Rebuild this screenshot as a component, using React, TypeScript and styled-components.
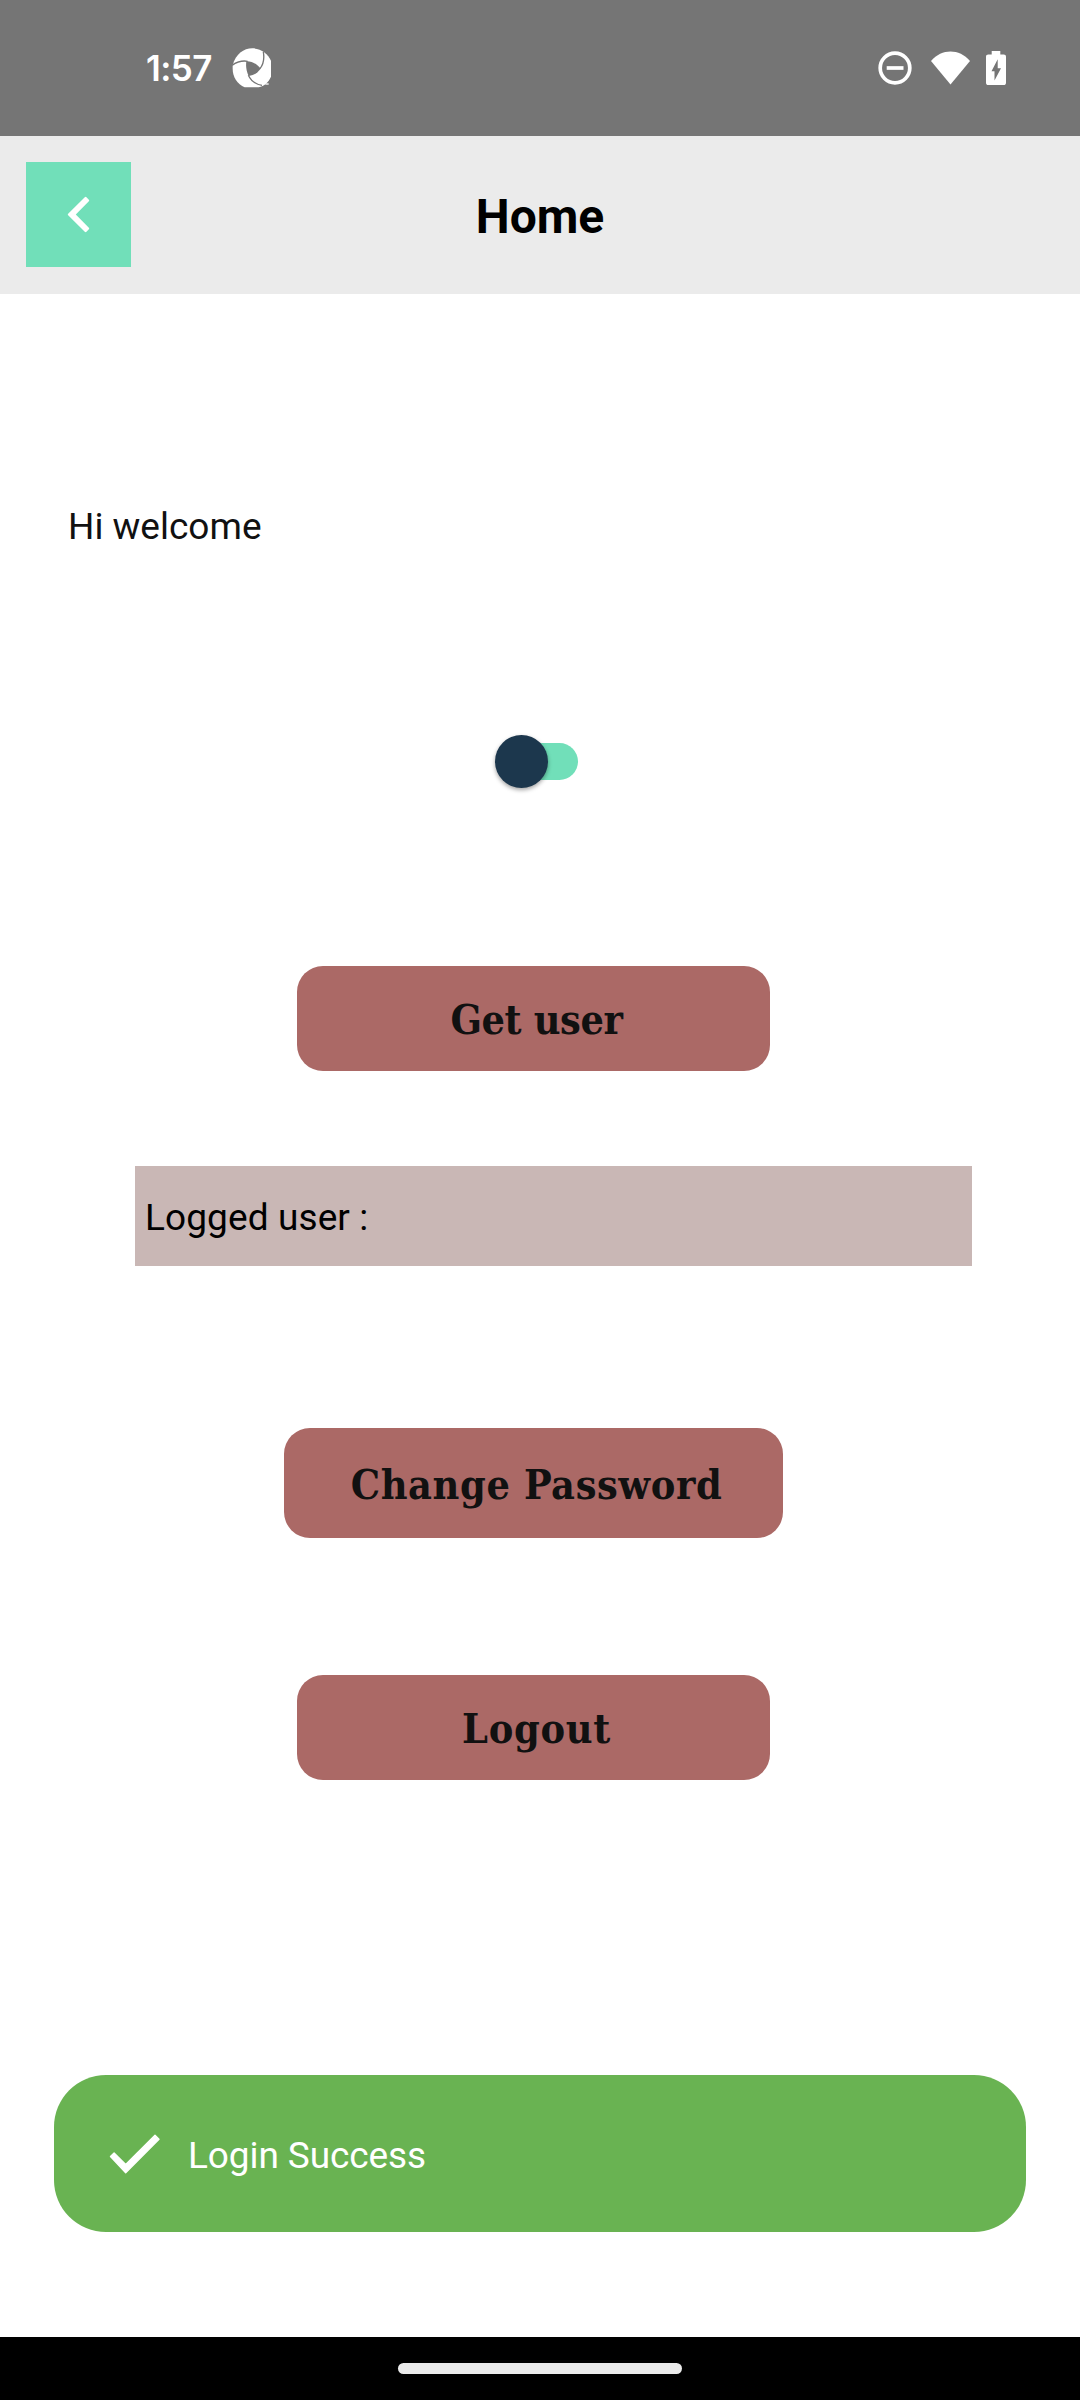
import React from "react";
import styled, { createGlobalStyle } from "styled-components";

const GlobalStyle = createGlobalStyle`
  * { box-sizing: border-box; }
  body { margin: 0; background: #fff; }
`;

const Screen = styled.div`
  display: flex;
  flex-direction: column;
  width: 1080px;
  height: 2400px;
  background: #fff;
  font-family: Roboto, sans-serif;
  overflow: hidden;
`;

const StatusBar = styled.div`
  display: flex;
  align-items: center;
  justify-content: space-between;
  height: 136px;
  padding: 0 74px 0 146px;
  background: #757575;
`;

const StatusGroup = styled.div`
  display: flex;
  align-items: center;
`;

const Clock = styled.span`
  width: 86px;
  font: 600 35px/40px Inter, sans-serif;
  letter-spacing: -0.6px;
  color: #fff;
  white-space: nowrap;
`;

const Header = styled.header`
  display: grid;
  grid-template-columns: 105px 1fr 105px;
  height: 158px;
  padding: 26px 26px 27px;
  background: #ebebeb;
`;

const BackButton = styled.button`
  display: flex;
  width: 105px;
  height: 105px;
  padding: 0;
  border: 0;
  background: #71dfb9;
`;

const Title = styled.h1`
  margin: 0;
  padding-top: 27px;
  font: 700 48px/56px Roboto, sans-serif;
  text-align: center;
  color: #000;
`;

const Content = styled.main`
  display: flex;
  flex-direction: column;
  flex: 1;
`;

const Greeting = styled.p`
  margin: 211px 0 0 68px;
  font-size: 37px;
  line-height: 44px;
  color: #111;
`;

const Switch = styled.div`
  display: flex;
  align-items: center;
  width: 83px;
  height: 53px;
  margin: 186px 0 0 495px;
`;

const Thumb = styled.div`
  flex: none;
  width: 53px;
  height: 53px;
  border-radius: 50%;
  background: #1c374d;
  box-shadow: 0 2px 4px rgba(0, 0, 0, 0.36);
  z-index: 1;
`;

const Track = styled.div`
  flex: none;
  width: 70px;
  height: 37px;
  margin-left: -40px;
  border-radius: 19px;
  background: #71dfb9;
`;

const ActionButton = styled.button<{ $top: number; $left: number; $width: number; $height: number; $spacing: number }>`
  display: flex;
  align-items: center;
  justify-content: center;
  width: ${(p) => p.$width}px;
  height: ${(p) => p.$height}px;
  margin: ${(p) => p.$top}px 0 0 ${(p) => p.$left}px;
  padding: 3px 0 0 6px;
  border: 0;
  border-radius: 26px;
  background: #ab6966;
  font: bold 41px/56px "DejaVu Serif Condensed", "DejaVu Serif", serif;
  font-stretch: condensed;
  letter-spacing: ${(p) => p.$spacing}px;
  color: #111;
  white-space: nowrap;
`;

const UserField = styled.div`
  width: 837px;
  height: 100px;
  margin: 95px 0 0 135px;
  padding: 30px 10px;
  background: #c9b7b5;
  font-size: 37px;
  line-height: 44px;
  letter-spacing: 0.1px;
  color: #000;
`;

const Toast = styled.div`
  display: flex;
  align-items: center;
  width: 972px;
  height: 157px;
  margin: 295px 0 0 54px;
  padding-left: 51px;
  gap: 23px;
  border-radius: 52px;
  background: #69b352;
  font-size: 37px;
  line-height: 44px;
  letter-spacing: -0.1px;
  color: #fff;
`;

const ToastText = styled.span`
  padding-top: 5px;
`;

const NavBar = styled.footer`
  display: flex;
  justify-content: center;
  height: 63px;
  padding-top: 26px;
  background: #000;
`;

const NavHandle = styled.div`
  width: 284px;
  height: 11px;
  border-radius: 6px;
  background: #ebebeb;
`;

const WifiSlot = styled.div`
  display: flex;
  margin: 0 16px 0 19px;
`;

const ApertureIcon = () => (
  <svg width="40" height="40" viewBox="336 56 120 120">
    <path d="M338 108C347 74 371 57 397 57C423 57 444 73 453 94V142C445 160 433 169 416 174H374C352 163 338 144 338 118Z" fill="#fff" />
    <path d="M379 96C394 95 412 104 422 118C412 131 402 138 386 140C379 126 377 111 379 96Z" fill="#757575" />
    <path d="M336 108C352 97 367 93 383 96M430 68C434 90 429 106 420 118M385 138C393 155 406 165 426 168" fill="none" stroke="#757575" strokeWidth="4" />
    <path d="M436 164h10" stroke="#fff" strokeWidth="4" />
  </svg>
);

const DoNotDisturbIcon = () => (
  <svg width="34" height="34" viewBox="0 0 34 34" fill="none" stroke="#fff" strokeWidth="3.7">
    <circle cx="17" cy="17" r="14.8" />
    <path d="M8.7 17h16.8" />
  </svg>
);

const WifiIcon = () => (
  <svg width="39" height="34" viewBox="0 0 39 34">
    <path d="M0 10C11-2.6 28-2.6 39 10L19.5 33.5Z" fill="#fff" />
  </svg>
);

const BatteryIcon = () => (
  <svg width="20" height="34" viewBox="0 0 20 34">
    <path d="M5.7 0h8.6v3.6h3.4c1.4 0 2.3.9 2.3 2.2v25.9c0 1.4-.9 2.3-2.3 2.3H2.3C.9 34 0 33.1 0 31.7V5.8c0-1.3.9-2.2 2.3-2.2h3.4z" fill="#fff" />
    <path d="M11.7 8.2v9H15L8.5 29.5v-9.2H5.5z" fill="#757575" />
  </svg>
);

export default function App() {
  return (
    <Screen>
      <GlobalStyle />
      <StatusBar>
        <StatusGroup>
          <Clock>1:57</Clock>
          <ApertureIcon />
        </StatusGroup>
        <StatusGroup>
          <DoNotDisturbIcon />
          <WifiSlot>
            <WifiIcon />
          </WifiSlot>
          <BatteryIcon />
        </StatusGroup>
      </StatusBar>
      <Header>
        <BackButton aria-label="Back">
          <svg width="105" height="105" viewBox="0 0 105 105">
            <path d="M59.6 36 43 52.5 59.6 69 62 66.5 48.2 52.5 62 38.5Z" fill="#fff" stroke="#fff" strokeWidth="2.4" strokeLinejoin="round" />
          </svg>
        </BackButton>
        <Title>Home</Title>
      </Header>
      <Content>
        <Greeting>Hi welcome</Greeting>
        <Switch role="switch" aria-checked="false">
          <Thumb />
          <Track />
        </Switch>
        <ActionButton $top={178} $left={297} $width={473} $height={105} $spacing={-0.4}>Get user</ActionButton>
        <UserField>Logged user :</UserField>
        <ActionButton $top={162} $left={284} $width={499} $height={110} $spacing={0.6}>Change Password</ActionButton>
        <ActionButton $top={137} $left={297} $width={473} $height={105} $spacing={0.7}>Logout</ActionButton>
        <Toast>
          <svg width="60" height="60" viewBox="0 0 60 60">
            <path d="m5.5 32.5 3.6-3.6 11.6 11.5L50 11.2l4 4-33.3 33.5Z" fill="#fff" stroke="#fff" strokeWidth="1.4" strokeLinejoin="round" />
          </svg>
          <ToastText>Login Success</ToastText>
        </Toast>
      </Content>
      <NavBar>
        <NavHandle />
      </NavBar>
    </Screen>
  );
}
